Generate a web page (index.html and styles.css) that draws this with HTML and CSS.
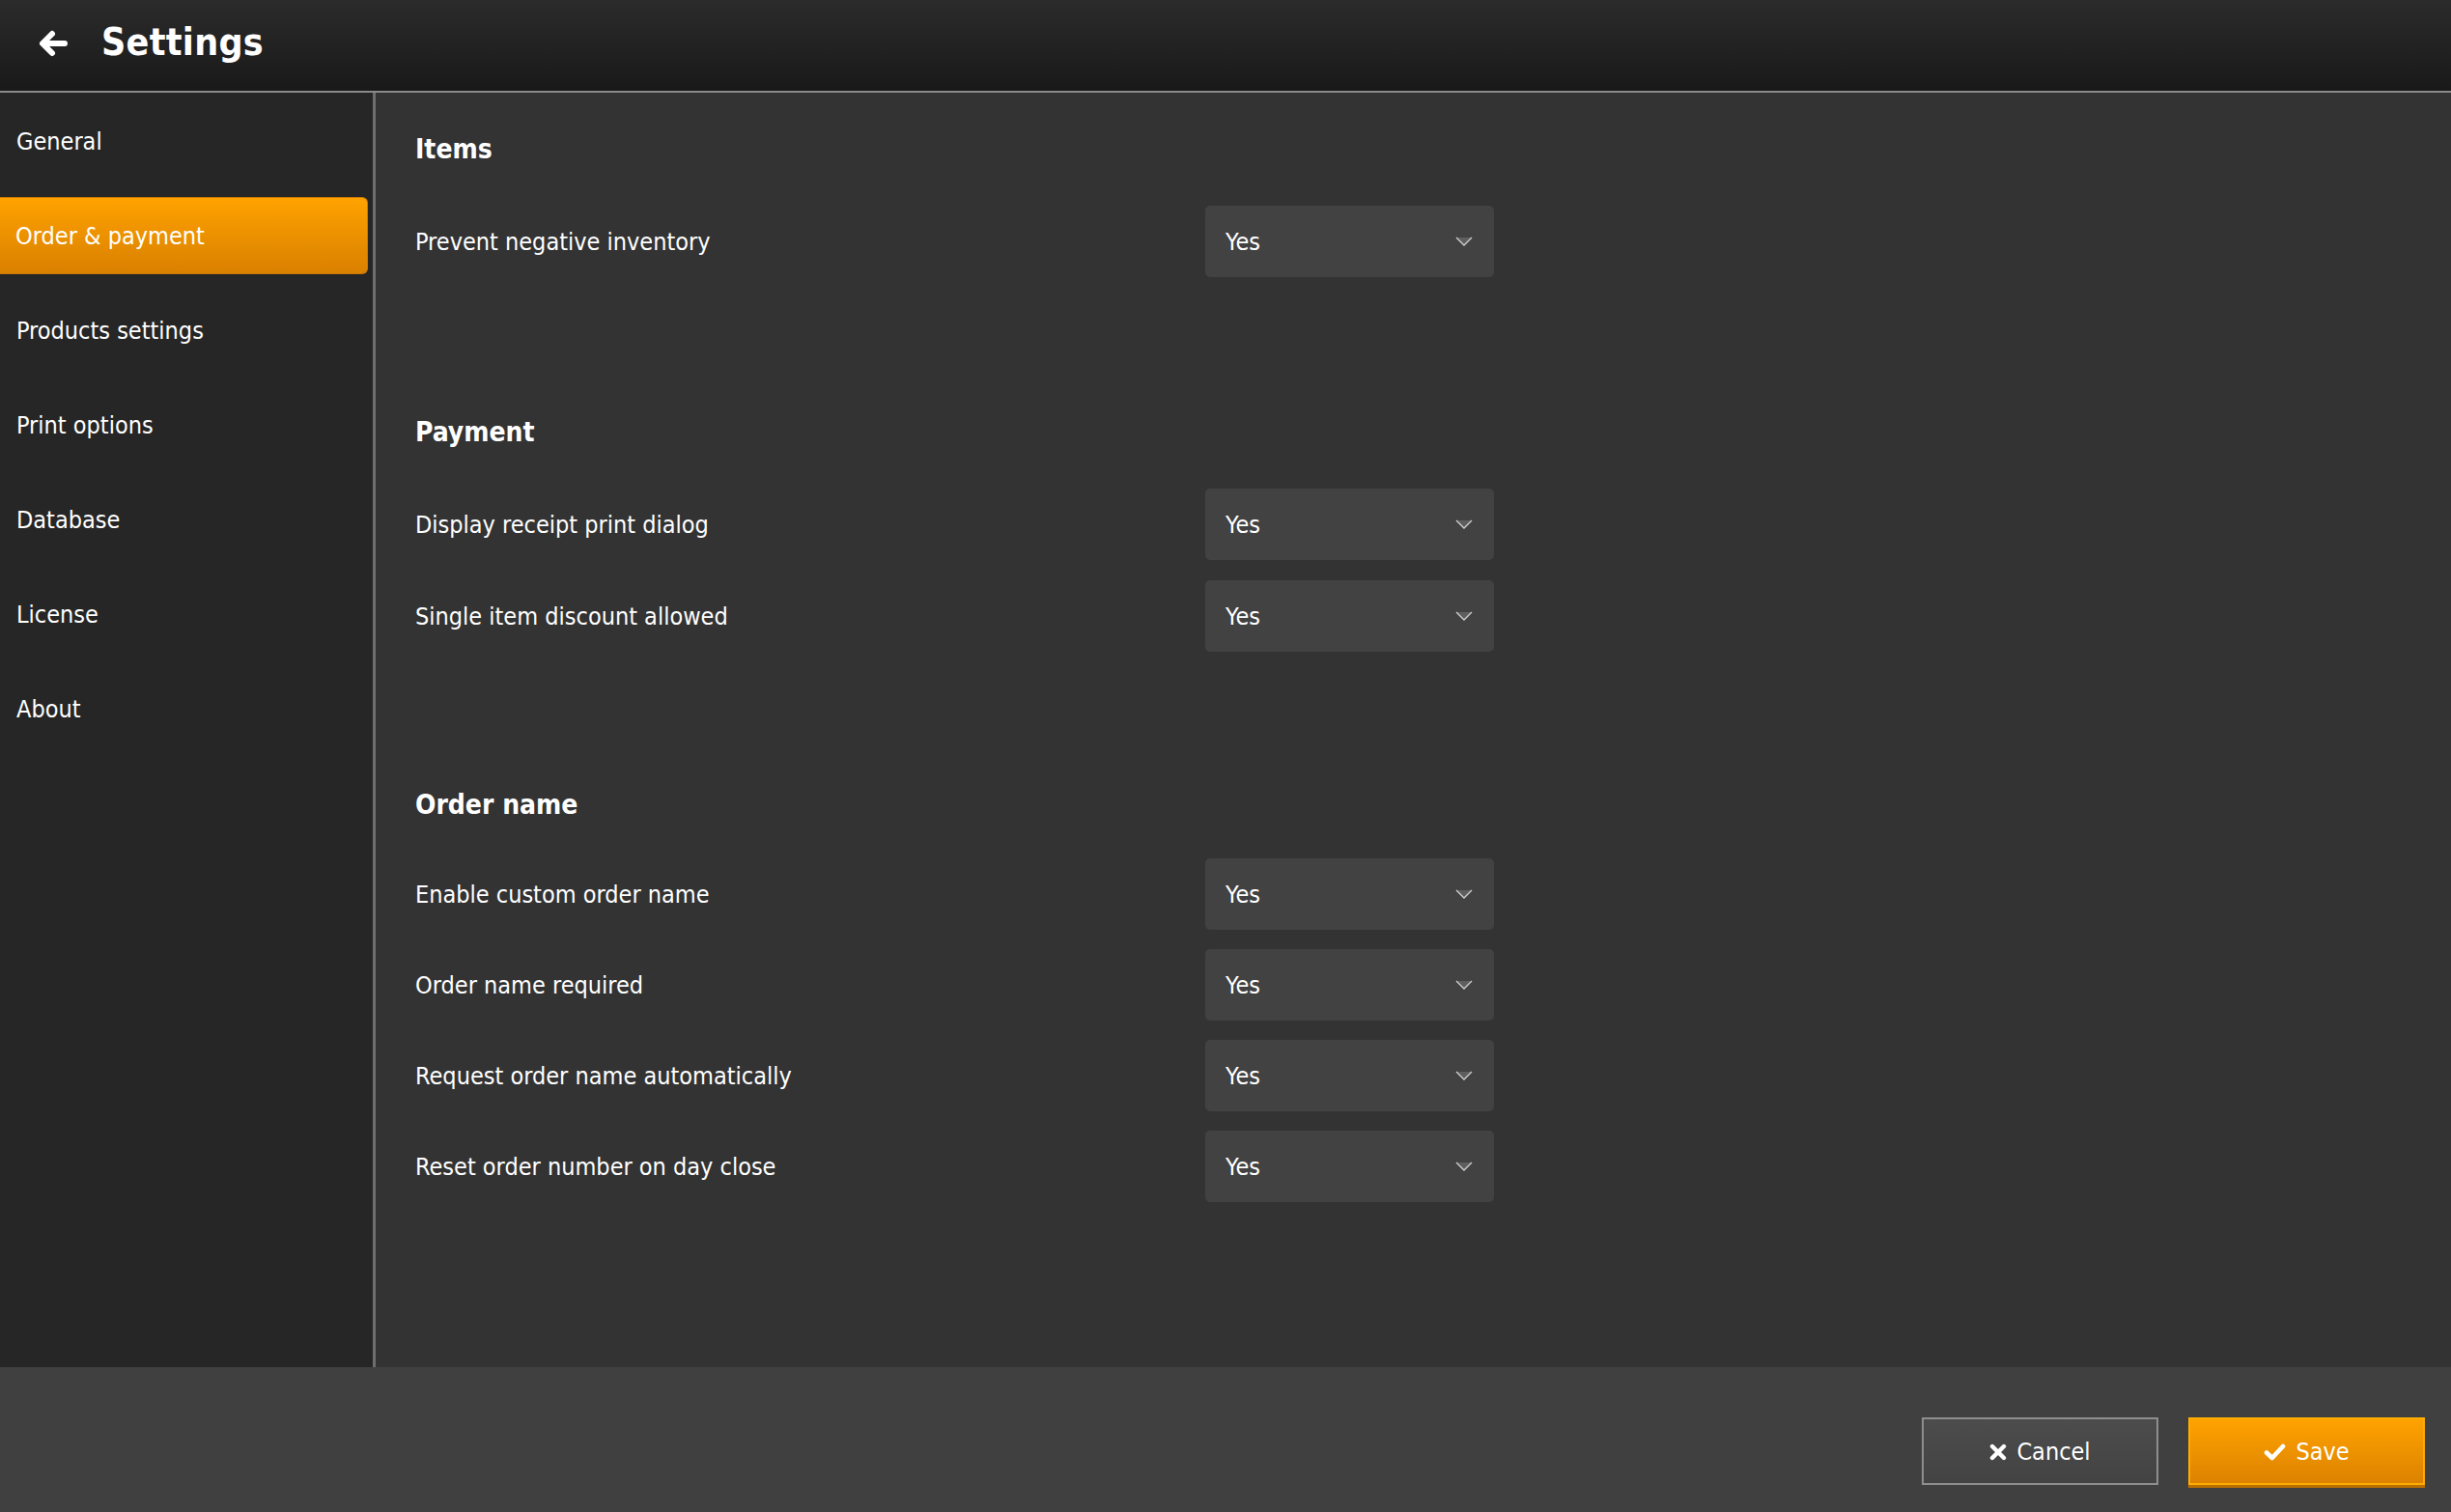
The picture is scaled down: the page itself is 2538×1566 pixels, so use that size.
FILE: index.html
```html
<!DOCTYPE html>
<html lang="en">
<head>
<meta charset="utf-8">
<title>Settings</title>
<link rel="stylesheet" href="styles.css">
</head>
<body>
<header class="topbar">
  <svg class="back" viewBox="0 0 32 32" width="32" height="32" aria-hidden="true">
    <path d="M28 16 H7 M15 6 L5 16 L15 26" fill="none" stroke="#fff" stroke-width="6" stroke-linecap="round" stroke-linejoin="round"/>
  </svg>
  <h1 class="title">Settings</h1>
</header>
<div class="main">
  <nav class="sidebar">
    <div class="nav-item">General</div>
    <div class="nav-item active">Order &amp; payment</div>
    <div class="nav-item">Products settings</div>
    <div class="nav-item">Print options</div>
    <div class="nav-item">Database</div>
    <div class="nav-item">License</div>
    <div class="nav-item">About</div>
  </nav>
  <section class="content">
    <div class="group group-items">
      <h2 class="group-title">Items</h2>
      <div class="rows">
        <div class="row"><span class="label">Prevent negative inventory</span><div class="select"><span>Yes</span><svg class="chev" viewBox="0 0 18 10" width="18" height="10"><polygon points="1,1 17,1 9,9" fill="#5e5e5e"/><polyline points="1,1 9,9 17,1" fill="none" stroke="#cfcfcf" stroke-width="1.3"/></svg></div></div>
      </div>
    </div>
    <div class="group group-payment">
      <h2 class="group-title">Payment</h2>
      <div class="rows">
        <div class="row"><span class="label">Display receipt print dialog</span><div class="select"><span>Yes</span><svg class="chev" viewBox="0 0 18 10" width="18" height="10"><polygon points="1,1 17,1 9,9" fill="#5e5e5e"/><polyline points="1,1 9,9 17,1" fill="none" stroke="#cfcfcf" stroke-width="1.3"/></svg></div></div>
        <div class="row"><span class="label">Single item discount allowed</span><div class="select"><span>Yes</span><svg class="chev" viewBox="0 0 18 10" width="18" height="10"><polygon points="1,1 17,1 9,9" fill="#5e5e5e"/><polyline points="1,1 9,9 17,1" fill="none" stroke="#cfcfcf" stroke-width="1.3"/></svg></div></div>
      </div>
    </div>
    <div class="group group-order">
      <h2 class="group-title">Order name</h2>
      <div class="rows">
        <div class="row"><span class="label">Enable custom order name</span><div class="select"><span>Yes</span><svg class="chev" viewBox="0 0 18 10" width="18" height="10"><polygon points="1,1 17,1 9,9" fill="#5e5e5e"/><polyline points="1,1 9,9 17,1" fill="none" stroke="#cfcfcf" stroke-width="1.3"/></svg></div></div>
        <div class="row"><span class="label">Order name required</span><div class="select"><span>Yes</span><svg class="chev" viewBox="0 0 18 10" width="18" height="10"><polygon points="1,1 17,1 9,9" fill="#5e5e5e"/><polyline points="1,1 9,9 17,1" fill="none" stroke="#cfcfcf" stroke-width="1.3"/></svg></div></div>
        <div class="row"><span class="label">Request order name automatically</span><div class="select"><span>Yes</span><svg class="chev" viewBox="0 0 18 10" width="18" height="10"><polygon points="1,1 17,1 9,9" fill="#5e5e5e"/><polyline points="1,1 9,9 17,1" fill="none" stroke="#cfcfcf" stroke-width="1.3"/></svg></div></div>
        <div class="row"><span class="label">Reset order number on day close</span><div class="select"><span>Yes</span><svg class="chev" viewBox="0 0 18 10" width="18" height="10"><polygon points="1,1 17,1 9,9" fill="#5e5e5e"/><polyline points="1,1 9,9 17,1" fill="none" stroke="#cfcfcf" stroke-width="1.3"/></svg></div></div>
      </div>
    </div>
  </section>
</div>
<footer class="footer">
  <button class="btn btn-cancel" type="button">
    <svg class="ico" viewBox="0 0 18 18" width="18" height="18" aria-hidden="true"><path d="M3 3 L15 15 M15 3 L3 15" stroke="#fff" stroke-width="4.4" stroke-linecap="round"/></svg>
    <span>Cancel</span>
  </button>
  <button class="btn btn-save" type="button">
    <svg class="ico" viewBox="0 0 23 18" width="23" height="18" aria-hidden="true"><path d="M3 9.5 L8.8 15 L20 3" fill="none" stroke="#fff" stroke-width="4.6" stroke-linecap="round" stroke-linejoin="round"/></svg>
    <span>Save</span>
  </button>
</footer>
</body>
</html>
```
FILE: styles.css
```css
* { box-sizing: border-box; }
html, body {
  margin: 0;
  padding: 0;
}
body {
  width: 2538px;
  height: 1566px;
  overflow: hidden;
  display: flex;
  flex-direction: column;
  background: #333333;
  color: #ffffff;
  font-family: "DejaVu Sans Condensed", "DejaVu Sans", sans-serif;
  font-stretch: condensed;
}

.topbar {
  height: 96px;
  flex: 0 0 96px;
  display: flex;
  align-items: center;
  padding: 0 0 7px 39px;
  background: linear-gradient(#2b2b2b, #191919);
  border-bottom: 2px solid #8a8a8a;
}
.back {
  width: 32px;
  height: 32px;
  margin-right: 34px;
  margin-top: 2px;
}
.title {
  margin: 0;
  font-size: 39px;
  font-weight: bold;
  letter-spacing: 0.3px;
}

.main {
  flex: 1 1 auto;
  display: flex;
  min-height: 0;
}
.sidebar {
  width: 389px;
  flex: 0 0 389px;
  background: #262626;
  border-right: 3px solid #6e6e6e;
  padding: 10px 5px 0 0;
  display: flex;
  flex-direction: column;
  gap: 18px;
}
.nav-item {
  height: 80px;
  line-height: 80px;
  padding-left: 16px;
  font-size: 25px;
  border-radius: 6px;
  border: 1px solid transparent;
}
.nav-item.active {
  background: linear-gradient(#ffa200, #d98000);
  border-color: #c97800;
  border-left: 0;
  border-top-left-radius: 0;
  border-bottom-left-radius: 0;
}

.content {
  flex: 1 1 auto;
  padding: 39px 0 0 41px;
  display: flex;
  flex-direction: column;
}
.group-items {
  margin-bottom: 141px;
}
.group-payment {
  margin-bottom: 139px;
}
.group-title {
  margin: 0 0 38px 0;
  height: 40px;
  line-height: 40px;
  font-size: 28px;
  font-weight: bold;
}
.group-order .group-title {
  margin-bottom: 35px;
}
.rows {
  display: flex;
  flex-direction: column;
  gap: 21px;
}
.group-order .rows {
  gap: 20px;
}
.row {
  display: grid;
  grid-template-columns: 818px 299px;
  align-items: center;
  height: 74px;
}
.label {
  font-size: 25px;
}
.select {
  height: 74px;
  background: #424242;
  border-radius: 5px;
  display: flex;
  align-items: center;
  justify-content: space-between;
  padding: 0 22px 0 21px;
  font-size: 25px;
}
.chev {
  display: block;
}

.footer {
  height: 150px;
  flex: 0 0 150px;
  background: #404040;
  display: flex;
  justify-content: flex-end;
  align-items: flex-start;
  padding: 52px 27px 0 0;
  gap: 31px;
}
.btn {
  width: 245px;
  height: 70px;
  display: flex;
  align-items: center;
  justify-content: center;
  gap: 10px;
  padding-top: 2px;
  font-family: inherit;
  font-size: 25px;
  color: #ffffff;
  cursor: pointer;
}
.btn-cancel {
  background: linear-gradient(#4c4c4c, #434343);
  border: 2px solid #8e8e8e;
}
.btn-save {
  background: linear-gradient(#ffa200, #dc8200);
  border: 2px solid #ffad00;
  box-shadow: 0 3px 0 #b86e00;
}
.ico {
  display: block;
}
```
